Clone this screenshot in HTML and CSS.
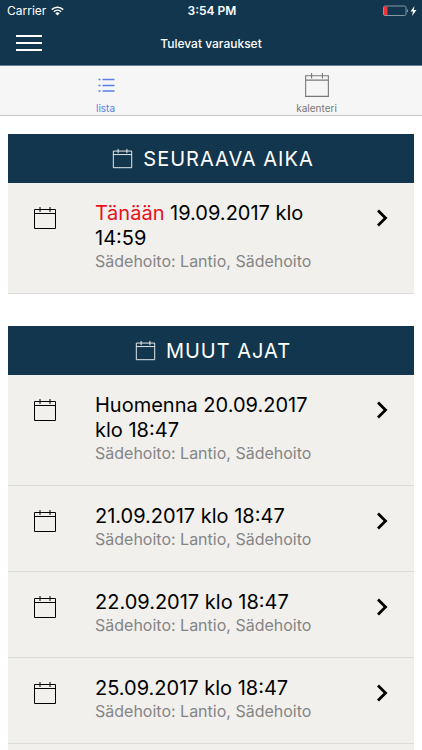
FILE: index.html
```html
<!DOCTYPE html>
<html lang="fi">
<head>
    <meta charset="utf-8">
    <meta name="viewport" content="width=device-width, initial-scale=1">
    <title>Tulevat varaukset</title>
    <link rel="stylesheet" href="styles.css">
</head>
<body>
    <!-- Shared icons -->
    <svg class="icon-defs" aria-hidden="true">
        <symbol id="calendar" viewBox="0 0 24 24">
            <path d="M1.5 3.5h21v19h-21zM1.5 7.5h21M7 1v5M17 1v5" fill="none" stroke="currentColor"/>
        </symbol>
        <symbol id="chevron" viewBox="0 0 12 18">
            <path d="M2 1.5l7.5 7.5L2 16.500" fill="none" stroke="currentColor" stroke-width="2.800"/>
        </symbol>
    </svg>

    <header class="header">
        <div class="status-bar">
            <div class="carrier">
                <span>Carrier</span>
                <svg class="wifi" viewBox="0 0 13 10" aria-hidden="true">
                    <path d="M.8 3.600a8.200 8.200 0 0 1 11.400 0M2.900 5.700a5.200 5.200 0 0 1 7.200 0" fill="none" stroke="currentColor" stroke-width="1.500"/>
                    <path d="M6.500 9.500L4.300 7.200a3.200 3.200 0 0 1 4.400 0z" fill="currentColor"/>
                </svg>
            </div>
            <span class="time">3:54 PM</span>
            <div class="power">
                <svg class="battery" viewBox="0 0 34 12" aria-hidden="true">
                    <rect x=".5" y="1" width="22.500" height="9.500" rx="1.500" fill="none" stroke="#8797a3"/>
                    <path d="M1 1.500h3.500v8.500H1z" fill="#f0323c"/>
                    <path d="M24 4c1.500.5 1.500 3 0 3.500z" fill="#8797a3"/>
                    <path d="M31.500 1L27.500 6.500h2.500L29 11 33.500 5h-2.800z" fill="#fff"/>
                </svg>
            </div>
        </div>
        <div class="nav-bar">
            <button class="menu-button" type="button" aria-label="Valikko">
                <svg class="menu-icon" viewBox="0 0 26 16" aria-hidden="true">
                    <path d="M0 1h26M0 8h26M0 15h26" stroke="currentColor" stroke-width="2"/>
                </svg>
            </button>
            <h1 class="title">Tulevat varaukset</h1>
        </div>
    </header>

    <nav class="tabs">
        <a class="tab active" href="#lista">
            <svg class="tab-icon" viewBox="0 0 26 26" aria-hidden="true">
                <path d="M9.500 7.500h12M9.500 13.500h12M9.500 19h12M5.500 7.500h2M5.500 13.500h2M5.500 19h2" stroke="currentColor" stroke-width="1.300"/>
            </svg>
            <span>lista</span>
        </a>
        <a class="tab" href="#kalenteri">
            <svg class="tab-icon" aria-hidden="true"><use href="#calendar"/></svg>
            <span>kalenteri</span>
        </a>
    </nav>

    <main class="content" id="lista">
        <section class="group">
            <h2 class="group-title">
                <svg class="title-icon" aria-hidden="true"><use href="#calendar"/></svg>
                SEURAAVA AIKA
            </h2>
            <a class="booking" href="#">
                <svg class="booking-icon" aria-hidden="true"><use href="#calendar"/></svg>
                <div class="info">
                    <p class="date"><span class="today">Tänään</span> 19.09.2017 klo 14:59</p>
                    <p class="details">Sädehoito: Lantio, Sädehoito</p>
                </div>
                <svg class="chevron" aria-hidden="true"><use href="#chevron"/></svg>
            </a>
        </section>

        <section class="group rest">
            <h2 class="group-title">
                <svg class="title-icon" aria-hidden="true"><use href="#calendar"/></svg>
                MUUT AJAT
            </h2>
            <a class="booking" href="#">
                <svg class="booking-icon" aria-hidden="true"><use href="#calendar"/></svg>
                <div class="info">
                    <p class="date">Huomenna 20.09.2017 klo 18:47</p>
                    <p class="details">Sädehoito: Lantio, Sädehoito</p>
                </div>
                <svg class="chevron" aria-hidden="true"><use href="#chevron"/></svg>
            </a>
            <a class="booking" href="#">
                <svg class="booking-icon" aria-hidden="true"><use href="#calendar"/></svg>
                <div class="info">
                    <p class="date">21.09.2017 klo 18:47</p>
                    <p class="details">Sädehoito: Lantio, Sädehoito</p>
                </div>
                <svg class="chevron" aria-hidden="true"><use href="#chevron"/></svg>
            </a>
            <a class="booking" href="#">
                <svg class="booking-icon" aria-hidden="true"><use href="#calendar"/></svg>
                <div class="info">
                    <p class="date">22.09.2017 klo 18:47</p>
                    <p class="details">Sädehoito: Lantio, Sädehoito</p>
                </div>
                <svg class="chevron" aria-hidden="true"><use href="#chevron"/></svg>
            </a>
            <a class="booking" href="#">
                <svg class="booking-icon" aria-hidden="true"><use href="#calendar"/></svg>
                <div class="info">
                    <p class="date">25.09.2017 klo 18:47</p>
                    <p class="details">Sädehoito: Lantio, Sädehoito</p>
                </div>
                <svg class="chevron" aria-hidden="true"><use href="#chevron"/></svg>
            </a>
        </section>
    </main>
</body>
</html>
```
FILE: styles.css
```css
* { box-sizing: border-box; }

body {
    margin: 0;
    min-height: 100vh;
    display: flex;
    flex-direction: column;
    background-color: #fff;
    color: #000;
    font-family: Inter, "Liberation Sans", sans-serif;
}

h1, h2, p { margin: 0; }
a { color: inherit; text-decoration: none; }
svg { display: block; flex: none; }

.icon-defs {
    display: none;
}

/* Header */
.header {
    background-color: #12364d;
    color: #fff;
    border-bottom: 1px solid #67808f;
}

.status-bar {
    display: grid;
    grid-template-columns: 1fr auto 1fr;
    align-items: center;
    height: 21px;
    padding: 0 5px 0 7px;
    font-size: 12px;
}

.carrier {
    display: flex;
    align-items: center;
    gap: 5px;
}

.wifi { width: 13px; height: 10px; }
.time { font-weight: 600; }
.power { justify-self: end; }
.battery { width: 34px; height: 12px; }

.nav-bar {
    display: grid;
    grid-template-columns: 1fr auto 1fr;
    align-items: center;
    height: 44px;
    padding: 0 16px;
}

.menu-button {
    justify-self: start;
    padding: 0;
    border: 0;
    background: none;
    color: #fff;
}

.menu-icon { width: 26px; height: 16px; }

.title {
    font-size: 12px;
    font-weight: 500;
}

/* Tabs */
.tabs {
    display: flex;
    height: 50px;
    background-color: #f6f6f6;
    border-bottom: 1px solid #c4c4c4;
}

.tab {
    flex: 1;
    display: flex;
    flex-direction: column;
    align-items: center;
    gap: 3px;
    padding-top: 6px;
    color: #777;
    font-size: 10px;
    line-height: 14px;
}

.tab.active { color: #5a80e8; }
.tab-icon { width: 26px; height: 26px; }

/* Bookings */
.content {
    flex: 1;
    display: flex;
    flex-direction: column;
    gap: 32px;
    padding: 18px 8px 0;
}

.group { background-color: #f1f0ed; }
.rest { flex: 1; }

.group-title {
    display: flex;
    align-items: center;
    justify-content: center;
    gap: 10px;
    height: 49px;
    padding-left: 4px;
    background-color: #12364d;
    color: #fff;
    font-size: 20px;
    font-weight: 400;
    letter-spacing: 1px;
}

.title-icon { width: 21px; height: 21px; }

.booking {
    display: flex;
    align-items: flex-start;
    padding: 18px 26px 22px 25px;
    border-bottom: 1px solid #dcdcda;
}

.booking-icon {
    width: 24px;
    height: 24px;
    margin-top: 5px;
}

.info {
    flex: 1;
    padding: 0 48px 0 38px;
}

.date {
    font-size: 20px;
    line-height: 25px;
}

.today { color: #e8101c; }

.details {
    color: #858585;
    font-size: 16px;
    line-height: 20px;
}

.chevron {
    width: 12px;
    height: 18px;
    margin-top: 8px;
}
```
